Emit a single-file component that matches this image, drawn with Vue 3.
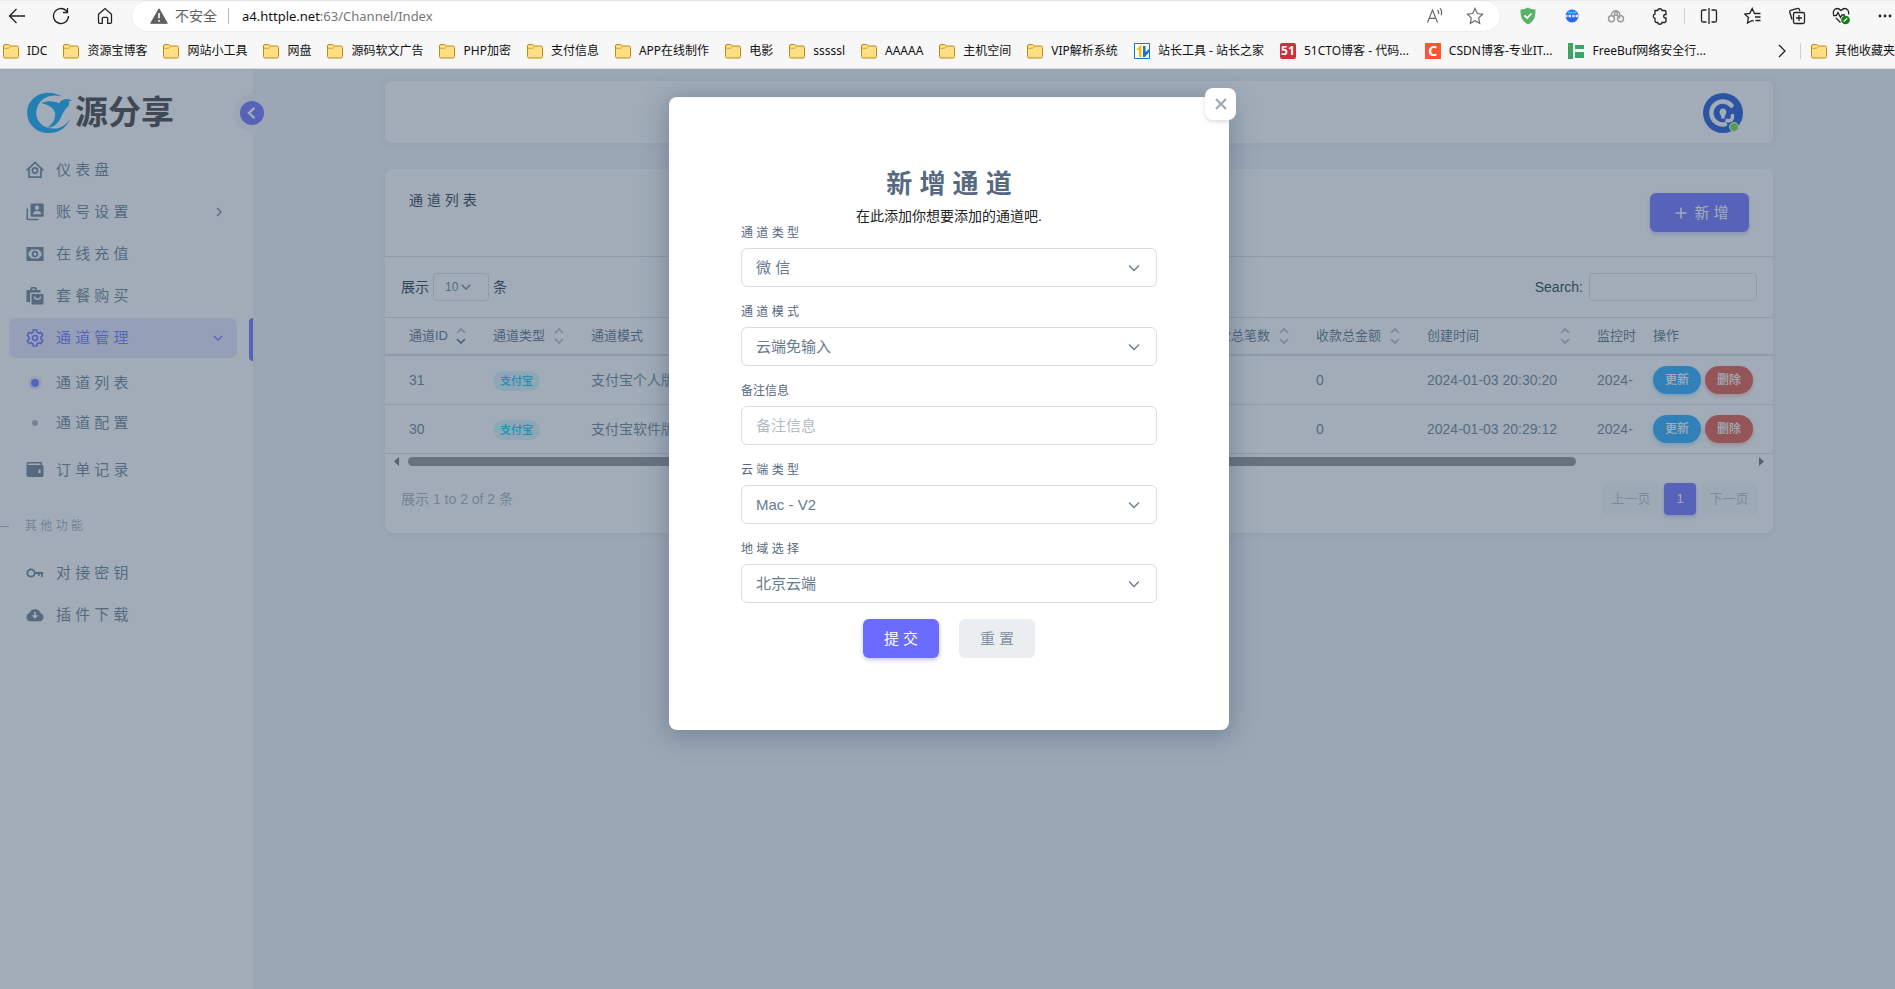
<script setup>
import { ref } from 'vue'

const bookmarks = [
  { label: 'IDC', icon: 'folder' },
  { label: '资源宝博客', icon: 'folder' },
  { label: '网站小工具', icon: 'folder' },
  { label: '网盘', icon: 'folder' },
  { label: '源码软文广告', icon: 'folder' },
  { label: 'PHP加密', icon: 'folder' },
  { label: '支付信息', icon: 'folder' },
  { label: 'APP在线制作', icon: 'folder' },
  { label: '电影', icon: 'folder' },
  { label: 'sssssl', icon: 'folder' },
  { label: 'AAAAA', icon: 'folder' },
  { label: '主机空间', icon: 'folder' },
  { label: 'VIP解析系统', icon: 'folder' },
  { label: '站长工具 - 站长之家', icon: 'chinaz' },
  { label: '51CTO博客 - 代码...', icon: 'cto' },
  { label: 'CSDN博客-专业IT...', icon: 'csdn' },
  { label: 'FreeBuf网络安全行...', icon: 'freebuf' },
]

const menu = [
  { label: '仪 表 盘', icon: 'home' },
  { label: '账 号 设 置', icon: 'account', arrow: 'right' },
  { label: '在 线 充 值', icon: 'money' },
  { label: '套 餐 购 买', icon: 'shop' },
  {
    label: '通 道 管 理',
    icon: 'gear',
    arrow: 'down',
    active: true,
    children: [{ label: '通 道 列 表', active: true }, { label: '通 道 配 置' }],
  },
  { label: '订 单 记 录', icon: 'wallet' },
]
const extraMenu = [
  { label: '对 接 密 钥', icon: 'key' },
  { label: '插 件 下 载', icon: 'cloud' },
]

const columns = ['通道ID', '通道类型', '通道模式', '收款总笔数', '收款总金额', '创建时间', '监控时', '操作']
const rows = [
  { id: 31, type: '支付宝', mode: '支付宝个人版', count: 0, total: 0, created: '2024-01-03 20:30:20', watched: '2024-' },
  { id: 30, type: '支付宝', mode: '支付宝软件版', count: 0, total: 0, created: '2024-01-03 20:29:12', watched: '2024-' },
]

const fields = [
  { id: 'type', label: '通 道 类 型', value: '微 信', select: true },
  { id: 'mode', label: '通 道 模 式', value: '云端免输入', select: true },
  { id: 'remark', label: '备注信息', placeholder: '备注信息' },
  { id: 'cloud', label: '云 端 类 型', value: 'Mac - V2', select: true },
  { id: 'region', label: '地 域 选 择', value: '北京云端', select: true },
]
const remark = ref('')
const search = ref('')
</script>

<template>
  <div class="screen">
    <header class="browser">
      <div class="toolbar">
        <div class="nav">
          <button type="button" aria-label="Back">
            <svg width="18" height="18" viewBox="0 0 18 18"><path d="M17 9H1.500M8.500 2L1.500 9l7 7" /></svg>
          </button>
          <button type="button" aria-label="Reload">
            <svg width="18" height="18" viewBox="0 0 18 18"><path d="M16.500 9a7.500 7.500 0 1 1-2.200-5.300L15.500 5M15.500 1v4.500H11" /></svg>
          </button>
          <button type="button" aria-label="Home">
            <svg width="18" height="18" viewBox="0 0 18 18"><path d="M2.500 7.300L9 1.500l6.500 5.800v8a1 1 0 0 1-1 1h-2.800v-5a1 1 0 0 0-1-1H7.300a1 1 0 0 0-1 1v5H3.500a1 1 0 0 1-1-1z" /></svg>
          </button>
        </div>
        <div class="address">
          <svg class="warn" width="18" height="16" viewBox="0 0 18 16"><path d="M9 0.800L17.300 15.300H0.700z" fill="#5f5f5f" stroke="#5f5f5f" stroke-linejoin="round" /><path d="M9 5v5.300M9 12v1.700" stroke="#fff" stroke-width="1.600" /></svg>
          <span class="insecure">不安全</span>
          <span class="bar"></span>
          <span class="url">a4.httple.net<i>:63/Channel/Index</i></span>
          <span class="grow"></span>
          <button type="button" aria-label="Read aloud">
            <svg width="18" height="18" viewBox="0 0 18 18" class="grey"><path d="M1.500 15.500L6.500 3l5 12.500M3.200 11.300h6.600M11.500 3c1 1 1.300 2.500.9 4M14 1.200c1.700 2 2 4.500 1.200 7" /></svg>
          </button>
          <button type="button" aria-label="Favourite">
            <svg width="18" height="18" viewBox="0 0 18 18" class="grey"><path d="M9 1.500l2.300 5 5.300.7-3.900 3.700 1 5.400L9 13.700l-4.700 2.600 1-5.400-3.900-3.700 5.300-.7z" /></svg>
          </button>
        </div>
        <div class="extensions">
          <button type="button" aria-label="Shield"><svg width="18" height="18" viewBox="0 0 18 18"><path d="M9 .5c2.500 1.500 5 2 7.500 2 0 7-1 11.500-7.500 15C2.500 14 1.500 9.500 1.500 2.500 4 2.500 6.500 2 9 .5z" fill="#58b368" stroke="none" /><path d="M5.500 8.500L8.200 11l4.300-4.500" stroke="#fff" stroke-width="1.800" /></svg></button>
          <button type="button" aria-label="Page assist"><svg width="18" height="18" viewBox="0 0 18 18"><circle cx="9" cy="9" r="6.500" fill="#2a63f6" stroke="none" /><path d="M4.500 5.500h9" stroke="#25c4f8" stroke-width="2" /><path d="M2 9h14" stroke="#dfe8ff" stroke-width="2.500" stroke-dasharray="2.500 1" /></svg></button>
          <button type="button" aria-label="Circles"><svg width="18" height="18" viewBox="0 0 18 18"><g stroke="#999" stroke-width="1.400"><path d="M4.500 9A4.300 4.300 0 1 1 13 8" /><circle cx="4.500" cy="11.700" r="3" /><circle cx="13.500" cy="11.700" r="3" /><circle cx="9" cy="6.500" r="1.500" /><path d="M9.800 7.800l3.200 3.500M8.200 7.800L6 10" /></g></svg></button>
          <button type="button" aria-label="Extensions"><svg width="18" height="18" viewBox="0 0 18 18"><path d="M4 3.500h2.700a2.200 2.200 0 0 1 4.300 0h2.500a1.500 1.500 0 0 1 1.500 1.500v2.500h-1a1.800 1.800 0 0 0 0 3.500h1v3a1.500 1.500 0 0 1-1.500 1.500H11a2.200 2.200 0 0 1-4.300 0H5.500A1.500 1.500 0 0 1 4 14v-2.700a2.200 2.200 0 0 1 0-4.300z" /></svg></button>
          <span class="bar"></span>
          <button type="button" aria-label="Split screen"><svg width="18" height="18" viewBox="0 0 18 18"><path d="M6.500 3H3a1.500 1.500 0 0 0-1.500 1.500v9A1.500 1.500 0 0 0 3 15h3.500M9 1v16M11.500 3H15a1.500 1.500 0 0 1 1.500 1.500v9A1.500 1.500 0 0 1 15 15h-3.500" /></svg></button>
          <button type="button" aria-label="Favourites"><svg width="18" height="18" viewBox="0 0 18 18"><path d="M16.500 6.500h-6L8.200 1.500 5.800 6.400l-5 .7 3.600 3.500-.9 5.400 4.700-2.600 1.500.8M11 10h5.500M11.500 13.500h5" /></svg></button>
          <button type="button" aria-label="Collections"><svg width="18" height="18" viewBox="0 0 18 18"><path d="M4 12.500L1.800 5.300a1.500 1.500 0 0 1 1-1.900L9.500 1.500a1.500 1.500 0 0 1 1.900 1l.5 1.500M7 5.500h8A1.500 1.500 0 0 1 16.500 7v8a1.500 1.500 0 0 1-1.500 1.500H7A1.500 1.500 0 0 1 5.500 15V7A1.500 1.500 0 0 1 7 5.500zM11 8v6M8 11h6" /></svg></button>
          <button type="button" aria-label="Performance"><svg width="18" height="18" viewBox="0 0 18 18"><path d="M1.500 7.500C.5 4 3 1.500 5.300 1.500c1.700 0 2.700 1 3.700 2 1-1 2-2 3.700-2 2.300 0 4.800 2.500 3.800 6M1 8.500h3.500L6 5.500l2.500 5L10 8h3M4 11l4.500 4.500" /><circle cx="13.500" cy="13" r="4.300" fill="#107c10" stroke="none" /><path d="M11.700 14.500l3.500-3.300" stroke="#fff" /></svg></button>
          <button type="button" aria-label="More"><svg width="18" height="18" viewBox="0 0 18 18"><g fill="#222" stroke="none"><circle cx="4" cy="9" r="1.400" /><circle cx="9" cy="9" r="1.400" /><circle cx="14" cy="9" r="1.400" /></g></svg></button>
        </div>
      </div>
      <nav class="bookmarks">
        <a v-for="b in bookmarks" :key="b.label" href="#">
          <svg v-if="b.icon === 'folder'" width="16" height="16" viewBox="0 0 16 16"><path d="M.5 3A1.500 1.500 0 0 1 2 1.500h3.500L7.500 3H14a1.500 1.500 0 0 1 1.500 1.500v9A1.500 1.500 0 0 1 14 15H2A1.500 1.500 0 0 1 .5 13.500z" fill="#ffdf85" stroke="#bd8c14" /><path d="M1 5.300h5l2-2.200" stroke="#d9a92c" fill="none" /></svg>
          <svg v-else-if="b.icon === 'chinaz'" width="16" height="16" viewBox="0 0 16 16"><path d="M.5.500h15v15H.5z" fill="#fff" stroke="#1377c0" /><path d="M2 6.500l5.500-5V14H5V7z" fill="#fdbe0a" /><path d="M9 3h2.500v6L15 6v3l-4 5H9z" fill="#1377c0" /></svg>
          <span v-else-if="b.icon === 'cto'" class="fav red">51</span>
          <span v-else-if="b.icon === 'csdn'" class="fav orange">C</span>
          <svg v-else width="16" height="16" viewBox="0 0 16 16"><path d="M0 0h5v16H0zM7 2h9v4H7zM7 9h9v6H7z" fill="#3aa566" /></svg>
          <span>{{ b.label }}</span>
        </a>
        <span class="grow"></span>
        <button type="button" class="more" aria-label="More bookmarks"><svg width="8" height="14" viewBox="0 0 8 14"><path d="M1 1l6 6-6 6" /></svg></button>
        <span class="bar"></span>
        <a href="#" class="last">
          <svg width="16" height="16" viewBox="0 0 16 16"><path d="M.5 3A1.500 1.500 0 0 1 2 1.500h3.500L7.500 3H14a1.500 1.500 0 0 1 1.500 1.500v9A1.500 1.500 0 0 1 14 15H2A1.500 1.500 0 0 1 .5 13.500z" fill="#ffdf85" stroke="#bd8c14" /><path d="M1 5.300h5l2-2.200" stroke="#d9a92c" fill="none" /></svg>
          <span>其他收藏夹</span>
        </a>
      </nav>
    </header>

    <div class="page">
      <aside class="sidebar">
        <a class="brand" href="#">
          <svg width="46" height="42" viewBox="0 0 46 42">
            <path d="M35 4.500C24-2.500 8 0 2 12-4 25 5 41 21 41c11 .5 19-5.500 22.500-15-4 7.500-11 11-18 10.500C13 36 7 26 10 16 13 6 24 1 35 4.500z" fill="#05a5f9" />
            <path d="M14 11c8-3 15-1.500 18 .5 1.500-3 5-5 9-4.500l4 1.500-3.500 1c1.500 1.500.5 4-1.500 6-4 4-5 9-8 13.500-3 4-7 7-11.500 6.500C27 31 28.500 26 28 21c-1-5-6-8-14-10z" fill="#05a5f9" />
          </svg>
          <span>源分享</span>
        </a>
        <button type="button" class="toggle" aria-label="Collapse menu">
          <svg width="24" height="24" viewBox="0 0 24 24"><path d="M14.500 6.800L9 12l5.500 5.200" fill="none" stroke="#fff" stroke-width="2.400" /></svg>
        </button>
        <ul class="menu">
          <li v-for="m in menu" :key="m.label">
            <a href="#" class="item" :class="{ active: m.active }">
              <svg class="icon" width="18" height="18" viewBox="0 0 18 18">
                <g v-if="m.icon === 'home'" fill="none" stroke="currentColor" stroke-width="1.700"><path d="M.7 9.300L9 1.500l8.300 7.800M3 7.500v8.700h12V7.500" /><circle cx="9" cy="9.500" r="2.600" /></g>
                <g v-else-if="m.icon === 'account'" fill="currentColor"><path fill-rule="evenodd" d="M5.500.5h11.200a1 1 0 0 1 1 1v11.200a1 1 0 0 1-1 1H5.500a1 1 0 0 1-1-1V1.500a1 1 0 0 1 1-1zM11 2.500a2.200 2.200 0 1 0 0 4.400 2.200 2.200 0 0 0 0-4.400zM7 11.300h8.200c0-2-1.900-3.200-4.100-3.200S7 9.300 7 11.300z" /><path d="M.5 5.500H2v10.300h10.500v1.500h-11a1 1 0 0 1-1-1z" /></g>
                <path v-else-if="m.icon === 'money'" fill="currentColor" fill-rule="evenodd" d="M.5 2h17v14H.5zM5 4.500A3 3 0 0 1 2.500 7v4A3 3 0 0 1 5 13.500h8a3 3 0 0 1 2.500-2.500V7A3 3 0 0 1 13 4.500zM9 5.700a3.300 3.300 0 1 1 0 6.600 3.300 3.300 0 0 1 0-6.600zM9 7.500a1.500 1.500 0 1 0 0 3 1.500 1.500 0 0 0 0-3z" />
                <g v-else-if="m.icon === 'shop'"><path fill="currentColor" fill-rule="evenodd" d="M4 3a3.500 3.500 0 0 1 7 0h3.500v2.500h-9A1.500 1.500 0 0 0 4 7v8H.5V3zm1.600 0h3.800a2 2 0 0 0-3.800 0zM5.500 7h12v9.500a1 1 0 0 1-1 1h-10a1 1 0 0 1-1-1z" /><path d="M8.300 9.500c.3 3.600 6.100 3.600 6.400 0" fill="none" stroke="#fff" stroke-width="1.500" /></g>
                <g v-else-if="m.icon === 'gear'" fill="none" stroke="currentColor" stroke-width="1.700"><path stroke-linejoin="round" d="M7.300 1h3.400l.4 2.300 1.700 1 2.200-.9 1.700 2.900L15 7.900v2.200l1.700 1.600-1.700 2.900-2.200-.9-1.700 1-.4 2.300H7.300l-.4-2.300-1.700-1-2.200.9-1.700-2.900L3 10.100V7.900L1.300 6.300 3 3.400l2.200.9 1.700-1z" /><circle cx="9" cy="9" r="2.500" /></g>
                <path v-else fill="currentColor" fill-rule="evenodd" d="M2.500 1H15a1 1 0 0 1 1 1v2h.5a1 1 0 0 1 1 1v10a1 1 0 0 1-1 1h-14a2 2 0 0 1-2-2V3a2 2 0 0 1 2-2zm0 1.500a.7.7 0 0 0 0 1.500h12V2.500zM12.500 8.500v3.500h2V8.500z" />
              </svg>
              <span>{{ m.label }}</span>
              <svg v-if="m.arrow" class="arrow" width="10" height="10" viewBox="0 0 10 10"><path :d="m.arrow === 'down' ? 'M1 3l4 4 4-4' : 'M4 1l4 4-4 4'" fill="none" stroke="currentColor" stroke-width="1.300" /></svg>
            </a>
            <ul v-if="m.children" class="sub">
              <li v-for="c in m.children" :key="c.label">
                <a href="#" class="item"><span class="dot" :class="{ on: c.active }"></span><span>{{ c.label }}</span></a>
              </li>
            </ul>
          </li>
          <li class="heading">其 他 功 能</li>
          <li v-for="m in extraMenu" :key="m.label">
            <a href="#" class="item">
              <svg class="icon" width="18" height="18" viewBox="0 0 18 18">
                <path v-if="m.icon === 'key'" fill="none" stroke="currentColor" stroke-width="1.800" d="M5 5.300a3.700 3.700 0 1 0 0 7.400 3.700 3.700 0 0 0 0-7.400zM8.700 9h8.500M16 9v4M12.800 9v3" />
                <path v-else fill="currentColor" fill-rule="evenodd" d="M14.800 7.500A6 6 0 0 0 3.400 7.100 4.200 4.200 0 0 0 4.500 15.300h9.200a4 4 0 0 0 1.100-7.800zM8.200 6h1.600v3.200h2.700L9 12.800 5.500 9.200h2.700z" />
              </svg>
              <span>{{ m.label }}</span>
            </a>
          </li>
        </ul>
      </aside>

      <main class="content">
        <section class="topbar">
          <div class="avatar">
            <svg width="40" height="40" viewBox="0 0 40 40"><circle cx="20" cy="20" r="20" fill="#174fd3" /><path d="M28.500 12.500A11.500 11.500 0 1 0 22 31.300" fill="none" stroke="#fff" stroke-width="4.500" stroke-linecap="round" /><path d="M17.500 25.500c1.500-1 1-2 0-3.500-2-3-.5-6.500 2.500-6.500s4.500 3.500 2.500 6.500c-1 1.500-1.500 2.500 0 3.500z" fill="#fff" /><path d="M24 27.500c3.500 1 6-1 5.500-5" fill="none" stroke="#fff" stroke-width="3.500" stroke-linecap="round" /></svg>
            <span class="online"></span>
          </div>
        </section>

        <section class="card">
          <div class="card-head">
            <h5>通 道 列 表</h5>
            <button type="button" class="primary add">
              <svg width="12" height="12" viewBox="0 0 12 12"><path d="M6 .500v11M.5 6h11" stroke="#fff" stroke-width="1.500" /></svg>
              <span>新 增</span>
            </button>
          </div>
          <div class="filters">
            <label class="length">展示
              <span class="pick">
                <select><option>10</option></select>
                <svg width="10" height="6" viewBox="0 0 10 6"><path d="M.7.700L5 5 9.300.700" fill="none" stroke="currentColor" stroke-width="1.300" /></svg>
              </span>
              条</label>
            <label class="search">Search: <input v-model="search" type="search" /></label>
          </div>
          <table>
            <colgroup>
              <col class="c-id" /><col class="c-type" /><col /><col class="c-sum" /><col class="c-sum" /><col class="c-time" /><col class="c-watch" /><col class="c-act" />
            </colgroup>
            <thead>
              <tr>
                <th v-for="(h, i) in columns" :key="h" :class="{ first: i === 0 }">
                  {{ h }}
                  <svg v-if="i < 6" class="sort" width="10" height="18" viewBox="0 0 10 18"><path d="M1 6l4-4 4 4" opacity=".5" /><path d="M1 12l4 4 4-4" :opacity="i === 0 ? 1 : 0.5" /></svg>
                </th>
              </tr>
            </thead>
            <tbody>
              <tr v-for="r in rows" :key="r.id">
                <td class="first">{{ r.id }}</td>
                <td><span class="badge">{{ r.type }}</span></td>
                <td>{{ r.mode }}</td>
                <td>{{ r.count }}</td>
                <td>{{ r.total }}</td>
                <td>{{ r.created }}</td>
                <td>{{ r.watched }}</td>
                <td><div class="acts"><button type="button" class="update">更新</button><button type="button" class="remove">删除</button></div></td>
              </tr>
            </tbody>
          </table>
          <div class="scrollbar">
            <svg width="5" height="9" viewBox="0 0 5 9"><path d="M5 0v9L0 4.500z" fill="#6b6b6b" /></svg>
            <div class="track"><div class="thumb"></div></div>
            <svg width="5" height="9" viewBox="0 0 5 9"><path d="M0 0v9l5-4.500z" fill="#6b6b6b" /></svg>
          </div>
          <div class="card-foot">
            <span>展示 1 to 2 of 2 条</span>
            <nav class="pages">
              <button type="button" disabled>上一页</button>
              <button type="button" class="primary">1</button>
              <button type="button" disabled>下一页</button>
            </nav>
          </div>
        </section>
      </main>

      <div class="backdrop">
        <div class="modal" role="dialog" aria-labelledby="dialog-title">
          <button type="button" class="close" aria-label="Close">
            <svg width="12" height="12" viewBox="0 0 12 12"><path d="M1 1l10 10M11 1L1 11" stroke="#a1acb8" stroke-width="2.400" /></svg>
          </button>
          <h3 id="dialog-title">新 增 通 道</h3>
          <p>在此添加你想要添加的通道吧.</p>
          <form @submit.prevent>
            <div v-for="f in fields" :key="f.id" class="field">
              <label :for="f.id">{{ f.label }}</label>
              <div v-if="f.select" class="select">
                <select :id="f.id"><option>{{ f.value }}</option></select>
                <svg width="12" height="8" viewBox="0 0 12 8"><path d="M1 1.500l5 5 5-5" fill="none" stroke="#697a8d" stroke-width="1.300" /></svg>
              </div>
              <input v-else :id="f.id" v-model="remark" type="text" :placeholder="f.placeholder" />
            </div>
            <div class="buttons">
              <button type="submit" class="primary">提 交</button>
              <button type="reset" class="muted">重 置</button>
            </div>
          </form>
        </div>
      </div>
    </div>
  </div>
</template>

<style>
body {
  margin: 0;
}
</style>

<style scoped>
* {
  box-sizing: border-box;
}
.screen {
  min-height: 100vh;
  display: flex;
  flex-direction: column;
  overflow: hidden;
  font-family: "Liberation Sans", "Noto Sans CJK SC", sans-serif;
  font-size: 14px;
  line-height: 20px;
  color: #697a8d;
}
a {
  color: inherit;
  text-decoration: none;
}
button,
input,
select {
  font: inherit;
  color: inherit;
  margin: 0;
  border: 0;
  padding: 0;
  background: none;
}
select {
  appearance: none;
}
ul {
  list-style: none;
  margin: 0;
  padding: 0;
}
svg {
  display: block;
  flex: none;
}
.grow {
  flex: 1;
}

/* browser chrome */
.browser {
  height: 69px;
  background: #f7f7f7;
  border-top: 1px solid #ececec;
  border-bottom: 1px solid #d8dade;
  font-family: "Noto Sans", "Noto Sans CJK SC", sans-serif;
  color: #111;
}
.browser svg {
  fill: none;
}
.browser button svg {
  stroke: #222;
  stroke-width: 1.3;
}
.browser button svg.grey {
  stroke: #6a6a6a;
  stroke-width: 1.2;
}
.toolbar {
  display: flex;
  align-items: center;
  height: 30px;
}
.nav {
  display: flex;
  gap: 26px;
  width: 132px;
  padding-left: 8px;
}
.address {
  flex: 1;
  height: 30px;
  border-radius: 15px;
  background: #fff;
  box-shadow: 0 0 2px rgba(0, 0, 0, 0.12);
  display: flex;
  align-items: center;
  padding: 0 16px 0 18px;
}
.address button {
  margin-left: 22px;
}
.insecure {
  margin: 0 11px 0 7px;
  color: #5f5f5f;
}
.bar {
  width: 1px;
  height: 16px;
  background: #b5b5b5;
}
.url {
  margin-left: 13px;
  font-size: 13px;
}
.url i {
  font-style: normal;
  color: #767676;
}
.extensions {
  display: flex;
  align-items: center;
  gap: 26px;
  width: 395px;
  padding-left: 19px;
}
.extensions .bar {
  margin: 0 -11px;
  background: #cfcfcf;
}
.bookmarks {
  display: flex;
  align-items: center;
  height: 40px;
  padding-left: 3px;
  font-size: 12px;
  white-space: nowrap;
  overflow: hidden;
}
.bookmarks a {
  display: flex;
  align-items: center;
  gap: 8px;
  margin-right: 16px;
}
.bookmarks .last {
  margin: 0 0 0 10px;
}
.more {
  margin-right: 14px;
}
.bookmarks .bar {
  background: #cfcfcf;
}
.fav {
  width: 16px;
  height: 16px;
  line-height: 16px;
  text-align: center;
  color: #fff;
  font-weight: 700;
}
.fav.red {
  background: #cf2e3b;
  border-radius: 2px;
}
.fav.orange {
  background: #fc5531;
  font-size: 14px;
}

/* page */
.page {
  flex: 1;
  display: flex;
  position: relative;
  background: #f5f5f9;
}
.sidebar {
  position: relative;
  width: 253px;
  background: #fff;
  box-shadow: 0 2px 6px rgba(161, 172, 184, 0.12);
}
.brand {
  display: flex;
  align-items: center;
  gap: 2px;
  height: 42px;
  margin: 23px 0 16px 27px;
}
.brand span {
  font-size: 33px;
  line-height: 42px;
  font-weight: 700;
  color: #3d3737;
}
.toggle {
  position: absolute;
  top: 25px;
  right: -18px;
  padding: 7px;
  border-radius: 50%;
  background: #f5f5f9;
}
.toggle svg {
  border-radius: 50%;
  background: #696cff;
}
.menu > li {
  position: relative;
  margin-bottom: 2px;
}
.item {
  display: flex;
  align-items: center;
  height: 40px;
  margin: 0 16px 0 9px;
  padding: 0 14px 0 17px;
  border-radius: 6px;
  font-size: 15px;
  line-height: 22px;
}
.icon {
  margin-right: 12px;
}
.arrow {
  margin-left: auto;
}
.item.active {
  background: #e7e7ff;
  color: #696cff;
}
.item.active::after {
  content: "";
  position: absolute;
  top: 0;
  right: 0;
  width: 4px;
  height: 43px;
  border-radius: 4px 0 0 4px;
  background: #696cff;
}
.sub {
  padding: 5px 0;
}
.dot {
  width: 6px;
  height: 6px;
  margin: 0 18px 0 6px;
  border-radius: 50%;
  background: #a3afbb;
}
.dot.on {
  width: 14px;
  height: 14px;
  margin: 0 14px 0 2px;
  border: 3px solid #e7e7ff;
  background: #696cff;
}
.heading {
  display: flex;
  align-items: center;
  gap: 16px;
  height: 20px;
  margin-top: 26px;
  font-size: 12px;
  color: #a1acb8;
}
.menu > .heading {
  margin-bottom: 17px;
}
.heading::before {
  content: "";
  width: 9px;
  height: 1px;
  background: #a1acb8;
}
.content {
  flex: 1;
  min-width: 0;
  padding: 12px 122px 0 132px;
}
.topbar {
  display: flex;
  justify-content: flex-end;
  height: 62px;
  padding: 12px 30px 0;
  border-radius: 6px;
  background: #fff;
  box-shadow: 0 0 6px 3px rgba(67, 89, 113, 0.06);
}
.avatar {
  position: relative;
  height: 40px;
}
.online {
  position: absolute;
  right: 4px;
  bottom: 1px;
  width: 10px;
  height: 10px;
  border: 1px solid #fff;
  border-radius: 50%;
  background: #71dd37;
}
.card {
  margin-top: 26px;
  padding-bottom: 18px;
  border-radius: 8px;
  background: #fff;
  box-shadow: 0 2px 6px rgba(67, 89, 113, 0.12);
}
.card-head {
  display: flex;
  justify-content: space-between;
  height: 88px;
  padding: 24px 24px 0;
  border-bottom: 1px solid #d9dee3;
}
h5 {
  margin: 0;
  height: 16px;
  font-size: 14px;
  line-height: 14px;
  font-weight: 400;
  color: #22303e;
}
.primary {
  border-radius: 6px;
  background: #696cff;
  color: #fff;
  box-shadow: 0 2px 4px rgba(105, 108, 255, 0.4);
}
.add {
  display: flex;
  align-items: center;
  justify-content: center;
  gap: 7px;
  width: 99px;
  height: 39px;
  padding-left: 5px;
  font-size: 15px;
}
.filters {
  display: flex;
  justify-content: space-between;
  align-items: center;
  height: 60px;
  padding: 0 16px;
  color: #22303e;
}
.filters label {
  display: flex;
  align-items: center;
  gap: 4px;
}
.pick {
  position: relative;
  color: #697a8d;
}
.pick select {
  display: block;
  width: 56px;
  height: 28px;
  padding-left: 11px;
  border: 1px solid #d9dee3;
  border-radius: 4px;
  font-size: 12px;
}
.pick svg {
  position: absolute;
  top: 11px;
  right: 18px;
}
.search input {
  width: 168px;
  height: 28px;
  margin-left: 2px;
  border: 1px solid #d9dee3;
  border-radius: 4px;
}
table {
  width: 100%;
  table-layout: fixed;
  border-collapse: separate;
  border-spacing: 0;
}
.c-id {
  width: 88px;
}
.c-type {
  width: 98px;
}
.c-sum {
  width: 111px;
}
.c-time {
  width: 170px;
}
.c-watch {
  width: 56px;
}
.c-act {
  width: 140px;
}
th,
td {
  position: relative;
  padding: 0 0 0 20px;
  text-align: left;
  white-space: nowrap;
  font-weight: 400;
}
th {
  height: 39px;
  border-top: 1px solid #d9dee3;
  border-bottom: 2px solid #d9dee3;
  font-size: 13px;
  color: #566a7f;
}
td {
  height: 49px;
  border-bottom: 1px solid #d9dee3;
}
.first {
  padding-left: 24px;
}
.sort {
  position: absolute;
  top: 9px;
  right: 7px;
  fill: none;
  stroke: #566a7f;
  stroke-width: 1.6;
}
.badge {
  display: inline-block;
  padding: 0 7px;
  border-radius: 10px;
  background: #d7f5fc;
  color: #03c3ec;
  font-size: 11px;
  font-weight: 500;
  line-height: 20px;
}
.acts {
  display: flex;
  gap: 4px;
}
.acts button {
  width: 48px;
  height: 28px;
  border-radius: 14px;
  color: #fff;
  font-size: 12px;
  font-weight: 500;
}
.update {
  background: #1fa9ff;
  box-shadow: 0 2px 4px rgba(31, 169, 255, 0.4);
}
.remove {
  background: #e5513f;
  box-shadow: 0 2px 4px rgba(229, 81, 63, 0.4);
}
.scrollbar {
  display: flex;
  align-items: center;
  gap: 9px;
  padding: 3px 9px;
}
.track {
  flex: 1;
}
.thumb {
  width: 87%;
  height: 9px;
  border-radius: 5px;
  background: #8b8b8b;
}
.card-foot {
  display: flex;
  justify-content: space-between;
  align-items: center;
  padding: 14px 16px 0;
  color: #a1acb8;
}
.pages {
  display: flex;
  gap: 5px;
}
.pages button {
  width: 32px;
  height: 32px;
  border-radius: 4px;
  font-size: 13px;
}
.pages button:disabled {
  width: 56px;
  background: #f8f9fa;
  color: #b5bdc6;
}

/* dialog */
.backdrop {
  position: absolute;
  inset: 0;
  z-index: 5;
  display: flex;
  justify-content: center;
  align-items: flex-start;
  padding: 28px 0 0 3px;
  background: rgba(67, 89, 113, 0.5);
}
.modal {
  position: relative;
  width: 560px;
  padding: 69px 72px 72px;
  border-radius: 8px;
  background: #fff;
  box-shadow: 0 4px 24px 4px rgba(67, 89, 113, 0.4);
}
.close {
  position: absolute;
  top: -9px;
  right: -7px;
  display: flex;
  align-items: center;
  justify-content: center;
  width: 31px;
  height: 32px;
  border-radius: 8px;
  background: #fff;
  box-shadow: 0 2px 4px rgba(161, 172, 184, 0.4);
}
h3 {
  margin: 0;
  font-size: 26px;
  line-height: 36px;
  font-weight: 700;
  text-align: center;
  color: #566a7f;
}
.modal p {
  margin: 6px 0 0;
  line-height: 16px;
  text-align: center;
  color: #222;
}
.field {
  margin-bottom: 16px;
}
.field label {
  display: block;
  height: 24px;
  font-size: 12px;
  line-height: 18px;
  color: #566a7f;
}
.select {
  position: relative;
}
.select svg {
  position: absolute;
  top: 16px;
  right: 17px;
}
.field select,
.field input {
  display: block;
  width: 100%;
  height: 39px;
  padding: 0 14px;
  border: 1px solid #d9dee3;
  border-radius: 6px;
  font-size: 15px;
}
.field input::placeholder {
  color: #b4bdc6;
  opacity: 1;
}
.buttons {
  display: flex;
  justify-content: center;
  gap: 20px;
}
.buttons button {
  width: 76px;
  height: 39px;
  border-radius: 6px;
  font-size: 15px;
}
.muted {
  background: #ebeef0;
  color: #8592a3;
}
</style>
